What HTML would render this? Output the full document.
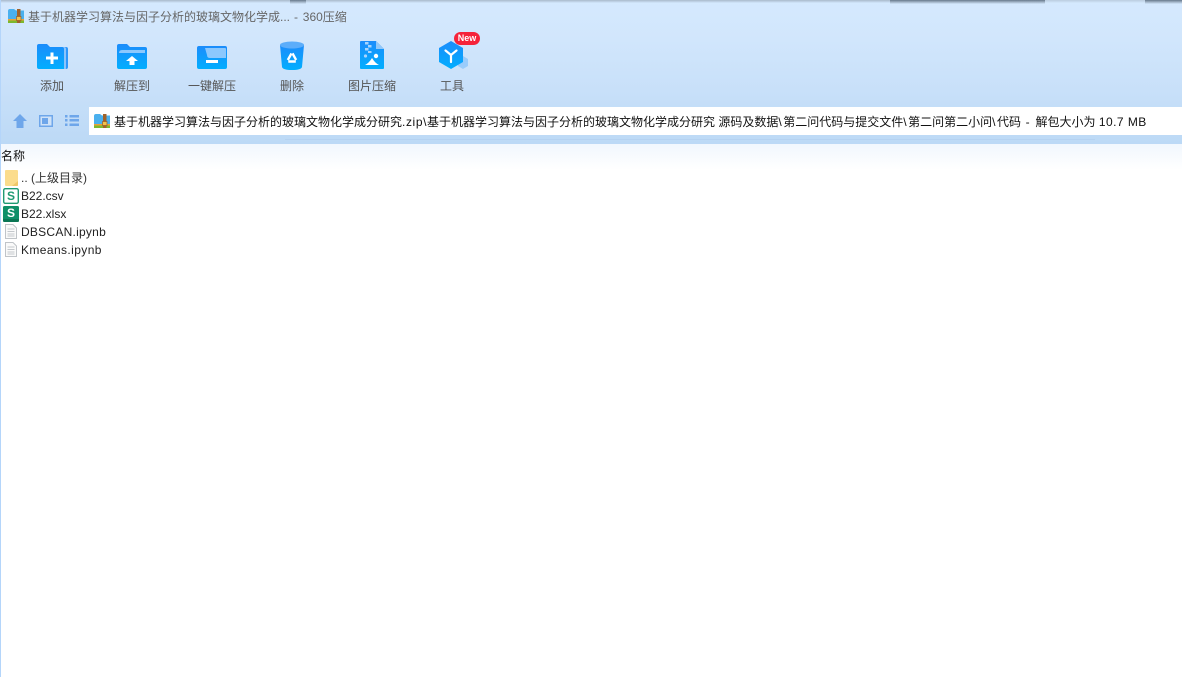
<!DOCTYPE html>
<html lang="zh">
<head>
<meta charset="utf-8">
<style>
html,body{margin:0;padding:0;width:1182px;height:677px;overflow:hidden;background:#fff}
body{position:relative;font-family:"Liberation Sans","Noto Sans CJK SC",sans-serif;font-size:12px;color:#222}
.abs{position:absolute}
.t{position:absolute;white-space:pre;line-height:18px}
.head{position:absolute;left:0;top:0;width:1182px;height:144px;background:linear-gradient(#d5e9fe 0,#d1e6fc 40px,#c8e0f9 90px,#bcd9f6 144px)}
.lab{position:absolute;top:77px;width:80px;text-align:center;line-height:18px;color:#555}
.bs{letter-spacing:1.5px}
.dk{position:absolute;top:0;height:4px;background:linear-gradient(#66788c,#94a6b9 40%,#d3e8fd)}
.lt{position:absolute;top:0;height:3px;background:linear-gradient(#a9b9ca,#d3e8fd)}
svg{position:absolute;overflow:visible}
</style>
</head>
<body>
<div class="head"></div>
<div class="lt" style="left:0;width:290px"></div>
<div class="dk" style="left:290px;width:16px"></div>
<div class="lt" style="left:306px;width:584px"></div>
<div class="dk" style="left:890px;width:155px"></div>
<div class="lt" style="left:1045px;width:100px;opacity:.6"></div>
<div class="dk" style="left:1145px;width:37px"></div>
<div class="abs" style="left:285px;top:139px;width:810px;height:1px;background:#b5d2f1"></div>
<div class="abs" style="left:0;top:144px;width:1182px;height:26px;background:linear-gradient(#f1f7fe,#fff)"></div>
<div class="abs" style="left:0;top:0;width:1px;height:677px;background:#b4d5fa"></div>

<!-- zip icon definition -->
<svg width="0" height="0" style="left:0;top:0"><defs>
<g id="zip">
<path d="M0 2Q0 0 2 0H6L8 1.500H16V11H0Z" fill="#4ab0ee"/>
<rect x="0" y="10" width="16" height="1.500" fill="#e9a23a"/>
<rect x="0" y="11.500" width="16" height="2.500" fill="#7cb82f"/>
<rect x="9" y="0" width="3.500" height="14" fill="#a0622a"/>
<rect x="8.500" y="7.500" width="4.500" height="4" fill="#f2c14e" stroke="#9a5a22" stroke-width=".7"/>
</g>
<linearGradient id="b" x1="0" y1="0" x2="0" y2="1"><stop offset="0" stop-color="#1c8cfb"/><stop offset="1" stop-color="#02aefe"/></linearGradient>
</defs></svg>

<!-- title -->
<svg style="left:8px;top:9px" width="16" height="15" viewBox="0 0 16 15"><use href="#zip"/></svg>
<div class="t" style="left:28px;top:8px;color:#666">基于机器学习算法与因子分析的玻璃文物化学成...<span style="letter-spacing:.7px"> - </span>360压缩</div>

<!-- add -->
<svg style="left:37px;top:44px" width="31" height="26" viewBox="0 0 31 26">
<path d="M12 3H29Q31 3 31 5V23Q31 25 29 25H26Z" fill="#2f97fb"/>
<path d="M12 3H27Q29 3 29 5V25H26Z" fill="#8cc4fb"/>
<path d="M0 2Q0 0 2 0H10L13 3H25Q27 3 27 5V25H2Q0 25 0 23Z" fill="url(#b)"/>
<path d="M13.500 8.500h3v4h4.500v3h-4.500v4.500h-3v-4.500h-4.500v-3h4.500z" fill="#fff"/>
</svg>
<div class="lab" style="left:12px">添加</div>

<!-- extract to -->
<svg style="left:117px;top:44px" width="30" height="25" viewBox="0 0 30 25">
<path d="M0 2Q0 0 2 0H10L13 3H28Q30 3 30 5V23Q30 25 28 25H2Q0 25 0 23Z" fill="url(#b)"/>
<path d="M2 9Q2 6 5 6H28V9Z" fill="#8cc8fd"/>
<path d="M15 12l6 5h-3.500v4h-5v-4H9z" fill="#fff"/>
</svg>
<div class="lab" style="left:92px">解压到</div>

<!-- one key extract -->
<svg style="left:197px;top:46px" width="30" height="23" viewBox="0 0 30 23">
<rect width="30" height="23" rx="2" fill="url(#b)"/>
<path d="M8 2H28Q29 2 29 3V12H13Q10 12 10 9Z" fill="#8cc8fd"/>
<rect x="9" y="14" width="12" height="3" fill="#fff"/>
</svg>
<div class="lab" style="left:172px">一键解压</div>

<!-- delete -->
<svg style="left:280px;top:41px" width="24" height="29" viewBox="0 0 24 29">
<path d="M0 4H24L22 26Q21 29 12 29Q3 29 2 26Z" fill="url(#b)"/>
<ellipse cx="12" cy="4" rx="12" ry="3.500" fill="#5cadfa"/>
<path d="M12 11.500L17 20.500H7Z" fill="none" stroke="#fff" stroke-width="2.400" stroke-linejoin="round" stroke-dasharray="7.500 3" stroke-dashoffset="-1"/>
</svg>
<div class="lab" style="left:252px">删除</div>

<!-- image compress -->
<svg style="left:360px;top:41px" width="24" height="28" viewBox="0 0 24 28">
<path d="M1 0H16L24 8V27Q24 28 23 28H1Q0 28 0 27V1Q0 0 1 0Z" fill="url(#b)"/>
<path d="M16 0L24 8H16Z" fill="#93c8f9"/>
<path d="M5 1h3.500v2.500H5zM8 4h3.500v2.500H8zM5 7h3.500v2.500H5zM8 10h3.500v2H8z" fill="#a8d4fd"/>
<circle cx="5.500" cy="15" r="1.600" fill="#a8d4fd"/>
<circle cx="16" cy="15" r="2.200" fill="#fff"/>
<path d="M5 24Q9 22 12 17Q15 22 19 24Z" fill="#fff"/>
</svg>
<div class="lab" style="left:332px">图片压缩</div>

<!-- tools -->
<svg style="left:439px;top:41px" width="30" height="29" viewBox="0 0 30 29">
<path d="M24 15l5 3v7l-5 3-5-3v-7z" fill="#9accfb"/>
<path d="M12 0l12 7v14l-12 7-12-7V7z" fill="url(#b)"/>
<path d="M6.500 9.500L12 14l5.500-4.500M12 14v7" fill="none" stroke="#fff" stroke-width="2.200" stroke-linecap="round"/>
</svg>
<div class="abs" style="left:454px;top:32px;width:26px;height:13px;border-radius:7px;background:#f5233a"></div>
<div class="t" style="left:454px;top:32px;width:26px;height:13px;line-height:13px;text-align:center;color:#fff;font-size:9px;font-weight:bold">New</div>
<div class="lab" style="left:412px">工具</div>

<!-- nav -->
<svg style="left:13px;top:114px" width="14" height="14" viewBox="0 0 14 14"><path d="M7 0L14 7H10.500V14H3.500V7H0Z" fill="#6ea6ea"/></svg>
<svg style="left:39px;top:115px" width="14" height="12" viewBox="0 0 14 12"><rect x=".75" y=".75" width="12.500" height="10.500" fill="#cfe2f8" stroke="#6ea6ea" stroke-width="1.500"/><rect x="3" y="3" width="6" height="6" fill="#6ea6ea"/></svg>
<svg style="left:65px;top:115px" width="14" height="11" viewBox="0 0 14 11"><path d="M0 0h2.500v2.500H0zM4.500 0H14v2.500H4.500zM0 4h2.500v2.500H0zM4.500 4H14v2.500H4.500zM0 8.500h2.500V11H0zM4.500 8.500H14V11H4.500z" fill="#6ea6ea"/></svg>

<!-- address bar -->
<div class="abs" style="left:89px;top:107px;width:1093px;height:28px;background:#fff"></div>
<svg style="left:94px;top:114px" width="16" height="15" viewBox="0 0 16 15"><use href="#zip"/></svg>
<div class="t" style="left:114px;top:113px;color:#111">基于机器学习算法与因子分析的玻璃文物化学成分研究<span style="letter-spacing:.6px">.zip\</span>基于机器学习算法与因子分析的玻璃文物化学成分研究 源码及数据<span class="bs">\</span>第二问代码与提交文件<span class="bs">\</span>第二问第二小问<span class="bs">\</span>代码<span style="letter-spacing:1.3px"> - </span>解包大小为 <span style="letter-spacing:.45px">10.7 MB</span></div>

<!-- list -->
<div class="t" style="left:1px;top:147px;color:#111">名称</div>

<svg style="left:5px;top:170px" width="13" height="16" viewBox="0 0 13 16"><path d="M1 0H12Q13 0 13 1V15Q13 16 12 16H1Q0 16 0 15V1Q0 0 1 0Z" fill="#fbdc8c"/><path d="M7 16L13 11V15Q13 16 12 16Z" fill="#f0c768"/></svg>
<div class="t" style="left:21px;top:169px;color:#333">.. (上级目录)</div>

<svg style="left:3px;top:188px" width="16" height="16" viewBox="0 0 16 16"><rect x=".7" y=".7" width="14.600" height="14.600" rx="1.500" fill="#fff" stroke="#1f9a73" stroke-width="1.400"/></svg>
<div class="t" style="left:3px;top:187px;width:16px;text-align:center;color:#1f9a73;font-weight:bold">S</div>
<div class="t" style="left:21px;top:187px;color:#222">B22.csv</div>

<svg style="left:3px;top:206px" width="16" height="16" viewBox="0 0 16 16"><rect width="16" height="16" rx="1.500" fill="#0f8f68"/><path d="M0 13H16V14.500Q16 16 14.500 16H1.500Q0 16 0 14.500Z" fill="#0b7654"/></svg>
<div class="t" style="left:3px;top:204px;width:16px;text-align:center;color:#fff;font-weight:bold">S</div>
<div class="t" style="left:21px;top:205px;color:#222">B22.xlsx</div>

<svg style="left:5px;top:224px" width="12" height="15" viewBox="0 0 12 15"><path d="M.5.500H8L11.500 4V14.500H.5Z" fill="#fafafa" stroke="#c0c4c8"/><path d="M2.500 5h7M2.500 7.500h7M2.500 10h7M2.500 12h7" stroke="#c4c8cc"/></svg>
<div class="t" style="left:21px;top:223px;color:#222;letter-spacing:.25px">DBSCAN.ipynb</div>

<svg style="left:5px;top:242px" width="12" height="15" viewBox="0 0 12 15"><path d="M.5.500H8L11.500 4V14.500H.5Z" fill="#fafafa" stroke="#c0c4c8"/><path d="M2.500 5h7M2.500 7.500h7M2.500 10h7M2.500 12h7" stroke="#c4c8cc"/></svg>
<div class="t" style="left:21px;top:241px;color:#222;letter-spacing:.4px">Kmeans.ipynb</div>
</body>
</html>
